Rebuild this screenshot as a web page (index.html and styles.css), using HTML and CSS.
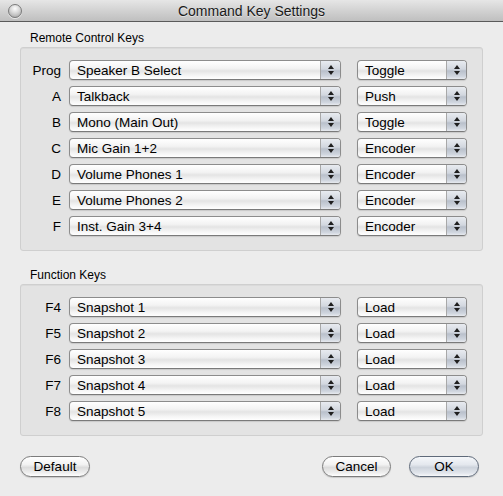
FILE: index.html
```html
<!DOCTYPE html>
<html>
<head>
<meta charset="utf-8">
<link rel="stylesheet" href="styles.css">
</head>
<body>
<div class="window">
  <div class="titlebar">
    <span class="closebtn"></span>
    <span class="title">Command Key Settings</span>
  </div>
  <div class="content">
    <div class="grouplabel first">Remote Control Keys</div>
    <div class="group g1">
      <div class="row"><span class="key">Prog</span><div class="popup wide"><span class="val">Speaker B Select</span><span class="step"><i class="up"></i><i class="dn"></i></span></div><div class="popup narrow"><span class="val">Toggle</span><span class="step"><i class="up"></i><i class="dn"></i></span></div></div>
      <div class="row"><span class="key">A</span><div class="popup wide"><span class="val">Talkback</span><span class="step"><i class="up"></i><i class="dn"></i></span></div><div class="popup narrow"><span class="val">Push</span><span class="step"><i class="up"></i><i class="dn"></i></span></div></div>
      <div class="row"><span class="key">B</span><div class="popup wide"><span class="val">Mono (Main Out)</span><span class="step"><i class="up"></i><i class="dn"></i></span></div><div class="popup narrow"><span class="val">Toggle</span><span class="step"><i class="up"></i><i class="dn"></i></span></div></div>
      <div class="row"><span class="key">C</span><div class="popup wide"><span class="val">Mic Gain 1+2</span><span class="step"><i class="up"></i><i class="dn"></i></span></div><div class="popup narrow"><span class="val">Encoder</span><span class="step"><i class="up"></i><i class="dn"></i></span></div></div>
      <div class="row"><span class="key">D</span><div class="popup wide"><span class="val">Volume Phones 1</span><span class="step"><i class="up"></i><i class="dn"></i></span></div><div class="popup narrow"><span class="val">Encoder</span><span class="step"><i class="up"></i><i class="dn"></i></span></div></div>
      <div class="row"><span class="key">E</span><div class="popup wide"><span class="val">Volume Phones 2</span><span class="step"><i class="up"></i><i class="dn"></i></span></div><div class="popup narrow"><span class="val">Encoder</span><span class="step"><i class="up"></i><i class="dn"></i></span></div></div>
      <div class="row"><span class="key">F</span><div class="popup wide"><span class="val">Inst. Gain 3+4</span><span class="step"><i class="up"></i><i class="dn"></i></span></div><div class="popup narrow"><span class="val">Encoder</span><span class="step"><i class="up"></i><i class="dn"></i></span></div></div>
    </div>
    <div class="grouplabel second">Function Keys</div>
    <div class="group g2">
      <div class="row"><span class="key">F4</span><div class="popup wide"><span class="val">Snapshot 1</span><span class="step"><i class="up"></i><i class="dn"></i></span></div><div class="popup narrow"><span class="val">Load</span><span class="step"><i class="up"></i><i class="dn"></i></span></div></div>
      <div class="row"><span class="key">F5</span><div class="popup wide"><span class="val">Snapshot 2</span><span class="step"><i class="up"></i><i class="dn"></i></span></div><div class="popup narrow"><span class="val">Load</span><span class="step"><i class="up"></i><i class="dn"></i></span></div></div>
      <div class="row"><span class="key">F6</span><div class="popup wide"><span class="val">Snapshot 3</span><span class="step"><i class="up"></i><i class="dn"></i></span></div><div class="popup narrow"><span class="val">Load</span><span class="step"><i class="up"></i><i class="dn"></i></span></div></div>
      <div class="row"><span class="key">F7</span><div class="popup wide"><span class="val">Snapshot 4</span><span class="step"><i class="up"></i><i class="dn"></i></span></div><div class="popup narrow"><span class="val">Load</span><span class="step"><i class="up"></i><i class="dn"></i></span></div></div>
      <div class="row"><span class="key">F8</span><div class="popup wide"><span class="val">Snapshot 5</span><span class="step"><i class="up"></i><i class="dn"></i></span></div><div class="popup narrow"><span class="val">Load</span><span class="step"><i class="up"></i><i class="dn"></i></span></div></div>
    </div>
    <div class="buttons">
      <button class="btn b-default">Default</button>
      <span class="spacer"></span>
      <button class="btn b-cancel">Cancel</button>
      <button class="btn b-ok">OK</button>
    </div>
  </div>
</div>
</body>
</html>
```
FILE: styles.css
```css
* { box-sizing: border-box; }
html, body { margin: 0; padding: 0; }
body {
  width: 503px;
  height: 496px;
  overflow: hidden;
  background: #ececec;
  font-family: "Liberation Sans", Arial, sans-serif;
  color: #000;
}
.window {
  width: 503px;
  height: 496px;
  background: #ececec;
}
.titlebar {
  height: 22px;
  background: linear-gradient(#e6e6e6 0%, #d2d2d2 50%, #bfbfbf 100%);
  border-bottom: 1px solid #5a5a5a;
  display: flex;
  align-items: center;
  justify-content: center;
  position: relative;
}
.closebtn {
  position: absolute;
  left: 8px;
  top: 4px;
  width: 14px;
  height: 14px;
  border-radius: 50%;
  background: radial-gradient(circle at 50% 30%, #fdfdfd 0%, #d6d6d6 45%, #9c9c9c 100%);
  border: 1px solid #7b7b7b;
  box-shadow: 0 1px 0 rgba(255,255,255,0.6);
}
.title {
  font-size: 14px;
  color: #1a1a1a;
  text-shadow: 0 1px 0 rgba(255,255,255,0.5);
}
.content {
  padding: 0 20px;
}
.grouplabel {
  font-size: 12px;
  padding-left: 10px;
  height: 13px;
  line-height: 13px;
}
.grouplabel.first { margin-top: 10px; margin-bottom: 2px; }
.grouplabel.second { margin-top: 18px; margin-bottom: 2px; }
.group {
  background: #e3e3e3;
  border: 1px solid #cfcfcf;
  border-radius: 3px;
  padding: 12px 15px 14px 0;
  display: flex;
  flex-direction: column;
  gap: 6px;
  box-shadow: inset 0 1px 0 #dadada;
}
.row {
  display: flex;
  align-items: center;
  height: 20px;
}
.key {
  width: 40px;
  text-align: right;
  font-size: 13.5px;
  margin-right: 8px;
}
.popup {
  height: 20px;
  border: 1px solid #8c8c8c;
  border-bottom-color: #7a7a7a;
  border-radius: 4px;
  display: flex;
  align-items: stretch;
  background: linear-gradient(#ffffff 0%, #f3f3f3 40%, #e4e4e4 55%, #f5f5f5 80%, #ffffff 100%);
  box-shadow: 0 1px 1px rgba(0,0,0,0.12);
  overflow: hidden;
}
.popup.wide { width: 272px; }
.popup.narrow { width: 110px; margin-left: 16px; }
.val {
  flex: 1;
  font-size: 13.5px;
  line-height: 19px;
  padding-left: 7px;
  white-space: nowrap;
}
.step {
  width: 20px;
  border-left: 1px solid #a8a8a8;
  background: linear-gradient(#e8ebf0 0%, #d2d7df 45%, #b9c0cb 55%, #cfd5de 85%, #e7eaef 100%);
  display: flex;
  flex-direction: column;
  align-items: center;
  justify-content: center;
  gap: 2px;
}
.step i {
  display: block;
  width: 0;
  height: 0;
  border-left: 3px solid transparent;
  border-right: 3px solid transparent;
}
.step .up { border-bottom: 4px solid #1f1f1f; }
.step .dn { border-top: 4px solid #1f1f1f; }
.buttons {
  display: flex;
  align-items: center;
  margin-top: 20px;
  gap: 18px;
}
.spacer { flex: 1; }
.btn {
  height: 21px;
  border-radius: 11px;
  border: 1px solid #7c7c7c;
  background: linear-gradient(#ffffff 0%, #f2f2f2 40%, #dcdcdc 55%, #f0f0f0 85%, #ffffff 100%);
  font-family: "Liberation Sans", Arial, sans-serif;
  font-size: 13.5px;
  color: #000;
  padding: 0;
  box-shadow: 0 1px 1px rgba(0,0,0,0.15);
}
.b-default { width: 70px; }
.b-cancel { width: 69px; }
.b-ok {
  width: 70px;
  margin-right: 4px;
  border-color: #5f6a7a;
  background: linear-gradient(#f5f7fa 0%, #e4e8ee 40%, #cdd3dc 55%, #e2e6ec 85%, #f7f8fa 100%);
}
```
